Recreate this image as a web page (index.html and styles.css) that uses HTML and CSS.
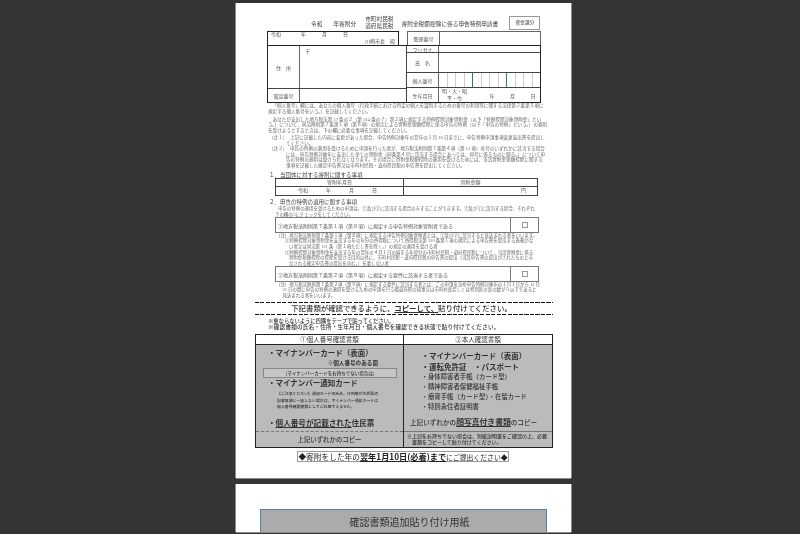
FILE: index.html
```html
<!DOCTYPE html>
<html lang="ja">
<head>
<meta charset="utf-8">
<title>寄附金税額控除に係る申告特例申請書</title>
<link rel="stylesheet" href="styles.css">
</head>
<body>
<main class="viewer">
<section class="page">
  <div class="title-row">
    <span class="t-era">令和</span><span class="t-year">年寄附分</span>
    <span class="t-tax"><span>市町村民税</span><span>道府県民税</span></span>
    <span class="t-name">寄附金税額控除に係る申告特例申請書</span>
    <span class="t-box">資金課分</span>
  </div>
  <div class="form">
    <div class="form-top">
      <div class="date-box"><div class="date-line"><span>令和</span><span class="d-y">年</span><span>月</span><span>日</span></div><div class="mayor">川崎市長　殿</div></div>
      <div class="ref-box"><span class="lab">整理番号</span><span></span></div>
    </div>
    <div class="form-main">
      <div class="left-col">
        <div class="l-row addr"><span class="lab">住　所</span><span class="val">〒</span></div>
        <div class="l-row tel"><span class="lab">電話番号</span><span class="val"></span></div>
      </div>
      <div class="right-col">
        <div class="r-row furi"><span class="lab">フリガナ</span><span></span></div>
        <div class="r-row name"><span class="lab">氏　名</span><span></span></div>
        <div class="r-row mynum"><span class="lab">個人番号</span><span class="digits"><i></i><i></i><i></i><i class="b"></i><i></i><i></i><i></i><i class="b"></i><i></i><i></i><i></i><i></i></span></div>
        <div class="r-row birth"><span class="lab">生年月日</span><span class="birth-val"><span class="era">明・大・昭<br>平・令</span><span>年</span><span>月</span><span>日</span></span></div>
      </div>
    </div>
  </div>
  <p class="para">「個人番号」欄には、あなたの個人番号（行政手続における特定の個人を識別するための番号の利用等に関する法律第２条第５項に<br>規定する個人番号をいう。）を記載してください。</p>
  <p class="para second">あなたが支出した地方税法第 37 条の２（第 314 条の７）第２項に規定する特例控除対象寄附金（以下「特例控除対象寄附金」とい<br>う。）について、同法附則第７条第１項（第８項）の規定による寄附金税額控除に係る申告の特例（以下「申告の特例」という。）の適用<br>を受けようとするときは、下の欄に必要な事項を記載してください。</p>
  <div class="note n1"><span>（注１）</span><p>上記に記載した内容に変更があった場合、申告特例対象年の翌年の１月 10 日までに、申告特例申請事項変更届出書を提出し<br>てください。</p></div>
  <div class="note"><span>（注２）</span><p>申告の特例の適用を受けるために申請を行った者が、地方税法附則第７条第４項（第 13 項）各号のいずれかに該当する場合<br>には、申告特例対象年に支出した全ての寄附金（同条第４号に該当する場合にあっては、同号に係るものに限る。）について申<br>告の特例の適用は受けられなくなります。その場合に寄附金税額控除の適用を受けるためには、当該寄附金税額控除に関する<br>事項を記載した確定申告書又は市町村民税・道府県民税の申告書を提出してください。</p></div>
  <h2 class="sec">１．当団体に対する寄附に関する事項</h2>
  <div class="gift">
    <div class="g-head"><span>寄附年月日</span><span>寄附金額</span></div>
    <div class="g-body"><span class="g-date"><b>令和</b><b>年</b><b>月</b><b>日</b></span><span class="g-yen">円</span></div>
  </div>
  <h2 class="sec two">２．申告の特例の適用に関する事項</h2>
  <p class="intro">申告の特例の適用を受けるための申請は、①及び②に該当する場合のみすることができます。①及び②に該当する場合、それぞれ<br>下の欄の□にチェックをしてください。</p>
  <div class="check"><span>①地方税法附則第７条第１項（第８項）に規定する申告特例対象寄附者である</span><span class="cb"><i></i></span></div>
  <div class="fine">（注）地方税法附則第７条第１項（第８項）に規定する申告特例対象寄附者とは、①及び②に該当すると見込まれる者をいいます。
    <p>⑴特例控除対象寄附金を支出する年の年分の所得税について所得税法第 120 条第１項の規定による申告書を提出する義務がな<br>い者又は同法第 121 条（第１項ただし書を除く。）の規定の適用を受ける者</p>
    <p>⑵特例控除対象寄附金を支出する年の翌年の４月１日の属する年度分の市町村民税・道府県民税について、当該寄附金に係る<br>寄附金税額控除の控除を受ける目的以外に、市町村民税・道府県民税の申告書の提出（当該申告書の提出がされたものとみ<br>なされる確定申告書の提出を含む。）を要しない者</p>
  </div>
  <div class="check"><span>②地方税法附則第７条第２項（第９項）に規定する要件に該当する者である</span><span class="cb"><i></i></span></div>
  <div class="fine fine2">（注）地方税法附則第７条第２項（第９項）に規定する要件に該当する者とは、この申請を含め申告特例対象年の１月１日から 12 月<br>31 日の間に申告の特例の適用を受けるための申請を行う都道府県の知事又は市町村長若しくは特別区の長の数が５以下であると<br>見込まれる者をいいます。</div>
  <div class="dash"></div>
  <div class="copy-line">下記書類が確認できるように、<u>コピーして、</u>貼り付けてください。</div>
  <div class="dash second"></div>
  <div class="warn">※重ならないように四隅をテープで貼ってください。<br>※確認書類の氏名・住所・生年月日・個人番号を確認できる状態で貼り付けてください。</div>
  <div class="docs">
    <div class="doc-col">
      <div class="doc-head">①個人番号確認書類</div>
      <div class="doc-body one">
        <div class="big">・マイナンバーカード（表面）</div>
        <div class="side">※個人番号のある面</div>
        <div class="strip">（マイナンバーカードをお持ちでない場合は）</div>
        <div class="big card2">・マイナンバー通知カード</div>
        <div class="tiny">【ご注意ください】通知カードの氏名、住所等が住民票の<br>記載事項と一致しない場合は、マイナンバー通知カードは<br>個人番号確認書類としてご利用できません。</div>
        <div class="big strong">・<u>個人番号が記載された</u>住民票</div>
      </div>
      <div class="doc-foot">上記いずれかのコピー</div>
    </div>
    <div class="doc-col">
      <div class="doc-head">②本人確認書類</div>
      <div class="doc-body two">
        <div class="big">・マイナンバーカード（表面）</div>
        <div class="big strong">・運転免許証　・パスポート</div>
        <div class="mid">・身体障害者手帳（カード型）</div>
        <div class="mid">・精神障害者保健福祉手帳</div>
        <div class="mid">・療育手帳（カード型）・在留カード</div>
        <div class="mid">・特別永住者証明書</div>
        <div class="sum">上記いずれかの<u>顔写真付き書類</u>のコピー</div>
      </div>
      <div class="doc-foot small">※上記をお持ちでない場合は、別紙説明書をご確認の上、必要<br><span class="out-s">書類をコピーして貼り付けてください。</span></div>
    </div>
  </div>
  <div class="deadline"><span class="dl-a">◆寄附をした年の</span><u>翌年1月10日(必着)まで</u><span class="dl-c">にご提出ください◆</span></div>
</section>
<section class="page next">
  <div class="add-head">確認書類追加貼り付け用紙</div>
</section>
</main>
</body>
</html>
```
FILE: styles.css
```css
* { box-sizing: border-box; margin: 0; padding: 0; }
html, body { width: 800px; height: 534px; overflow: hidden; background: #343434; }
body { font-family: "Liberation Serif", "Noto Sans CJK JP", serif; color: #333; }
.viewer { height: 534px; padding: 3px 0 0 236px; overflow: hidden; display: flex; flex-direction: column; align-items: flex-start; gap: 6px; }
.page { width: 335px; height: 475px; flex: none; background: #fff; padding: 0 0 0 31px; box-shadow: -1px 0 0 #8a8a8a, 1px 0 0 #8a8a8a, 0 1px 0 #8a8a8a; filter: blur(.3px); white-space: nowrap; }
.page.next { height: 48px; padding: 25px 0 0 24px; }
.add-head { width: 287px; height: 23px; padding-left: 12px; background: #ababab; border: 1px solid #5f7e9e; border-bottom: 0; font-family: "Noto Sans CJK JP", sans-serif; font-size: 10px; line-height: 24px; text-align: center; color: #333; }
.title-row { height: 28px; padding-top: 12px; display: flex; align-items: center; font-size: 5.7px; color: #444; }
.t-era { margin-left: 44px; }
.t-year { margin-left: 11px; }
.t-tax { margin-left: 9px; display: flex; flex-direction: column; line-height: 7.5px; }
.t-name { margin-left: 8px; }
.t-box { margin-left: 11px; width: 31px; height: 14px; border: 1px solid #999; font-size: 4.8px; line-height: 12px; text-align: center; }
.form { width: 274px; font-size: 5px; color: #555; }
.form-top { display: flex; height: 14px; justify-content: space-between; }
.date-box { width: 132px; border: 1px solid #222; border-bottom: 0; padding: 0 3px; }
.date-line { display: flex; gap: 16px; line-height: 6px; }
.d-y { margin-left: 4px; }
.mayor { text-align: right; line-height: 6px; margin-top: 1px; }
.ref-box { width: 134px; border: 1px solid #666; border-bottom: 0; display: flex; }
.lab { flex: none; display: flex; align-items: center; justify-content: center; width: 32px; border-right: 1px solid #666; height: 100%; }
.form-main { display: flex; height: 58px; border: 1px solid #222; }
.left-col { width: 139px; border-right: 1px solid #444; display: flex; flex-direction: column; }
.l-row { display: flex; }
.l-row.addr { height: 43px; border-bottom: 1px solid #444; }
.l-row.tel { flex: 1; }
.val { padding: 2px 5px; font-size: 5.5px; }
.right-col { flex: 1; display: flex; flex-direction: column; }
.r-row { display: flex; border-bottom: 1px solid #444; }
.r-row:last-child { border-bottom: 0; }
.furi { height: 7px; } .name { height: 21px; } .mynum { height: 15px; } .birth { flex: 1; }
.digits { flex: 1; display: flex; }
.digits i { flex: 1; border-right: 1px solid #ccc; }
.digits i.b { border-right-color: #3d6f96; }
.digits i:last-child { border-right: 0; }
.birth-val { flex: 1; display: flex; align-items: center; gap: 15.5px; padding-left: 3px; }
.era { width: 25px; margin-right: 7px; line-height: 7px; text-align: center; }
.para, .note { font-size: 4.6px; line-height: 5.6px; color: #666; padding-left: 1px; }
.para { text-indent: 4.5px; }
.para.second { margin-top: 2.5px; }
.note { display: flex; }
.note.n1 { margin-top: 1.5px; }
.note > span { flex: none; width: 18px; padding-left: 1px; }
.note p { flex: 1; text-indent: 4px; }
.sec { font-size: 5.5px; font-weight: 400; color: #444; line-height: 7px; margin-top: 3px; padding-left: 2px; }
.sec.two { margin-top: 3.5px; }
.gift { width: 263px; margin: -1px 0 0 8px; border: 1px solid #444; font-size: 5px; color: #555; }
.g-head { display: flex; height: 8px; border-bottom: 1px solid #444; line-height: 7px; text-align: center; }
.g-head span:first-child { width: 128px; border-right: 1px solid #444; }
.g-head span:last-child { flex: 1; }
.g-body { display: flex; height: 8px; line-height: 8px; }
.g-date { width: 128px; border-right: 1px solid #444; display: flex; gap: 18px; padding-left: 22px; }
.g-date b { font-weight: 400; }
.g-yen { flex: 1; text-align: right; padding-right: 11px; }
.intro { margin-left: 8px; font-size: 4.45px; line-height: 5.6px; color: #666; text-indent: 3px; }
.check { width: 264px; margin-left: 8px; height: 16px; border: 1px solid #777; display: flex; align-items: center; font-size: 5px; color: #555; }
.check span:first-child { flex: 1; padding-left: 2px; }
.cb { flex: none; width: 28px; height: 100%; border-left: 1px solid #777; display: flex; align-items: center; justify-content: center; }
.cb i { width: 6px; height: 6px; border: 1px solid #999; }
.fine { margin: -.5px 0 0 9px; font-size: 4.45px; line-height: 5.6px; color: #666; }
.fine p { padding-left: 13px; text-indent: -4px; }
.fine2 { padding-left: 6.5px; text-indent: -6.5px; }
.dash { width: 298px; margin: 3.5px 0 0 -12px; height: 1px; background: repeating-linear-gradient(90deg, #111 0 4px, transparent 4px 5.5px); }
.copy-line { width: 283px; margin-left: -7px; text-align: center; font-family: "Noto Sans CJK JP", sans-serif; font-size: 7.4px; line-height: 10.5px; font-weight: 500; color: #333; }
.copy-line u { font-weight: 700; }
.dash.second { margin-top: 0; }
.warn { margin-top: 3px; padding-left: 1px; font-family: "Noto Sans CJK JP", sans-serif; font-size: 5.6px; letter-spacing: .2px; line-height: 6.6px; font-weight: 500; color: #333; }
.warn::first-line { font-size: 5.3px; letter-spacing: 0; }
.docs { width: 298px; margin: 3px 0 0 -12px; display: flex; border: 1px solid #222; font-family: "Noto Sans CJK JP", sans-serif; color: #333; background: #bbb; }
.doc-col { display: flex; flex-direction: column; }
.doc-col:first-child { width: 148px; border-right: 1px solid #222; }
.doc-col:last-child { flex: 1; }
.doc-head { height: 10px; background: #fff; border-bottom: 1px solid #222; font-size: 6.5px; line-height: 9px; text-align: center; }
.doc-body { height: 86px; }
.doc-body.one { padding: 2px 0 0 12px; }
.doc-body.two { padding: 5.5px 0 0 17.5px; }
.big { font-size: 7.5px; line-height: 11px; font-weight: 700; }
.one .big.strong { margin-top: 6.5px; font-size: 7.6px; }
.big.card2 { margin-top: -1.5px; }
.side { margin-top: 2px; font-size: 5.6px; line-height: 7px; font-weight: 700; text-align: right; padding-right: 25px; }
.strip { margin: 1.5px 0 0 -5px; width: 134px; height: 10px; border: 1px solid #888; background: #c6c6c6; font-size: 4.5px; line-height: 8px; text-align: center; font-weight: 500; }
.tiny { font-size: 3.9px; line-height: 6.8px; margin: 2px 0 0 9px; font-weight: 500; }
.mid { font-size: 6.4px; line-height: 10px; font-weight: 500; }
.sum { font-size: 6.6px; line-height: 10px; font-weight: 500; margin: 5px 0 0 -11.5px; }
.sum u { font-size: 7.8px; font-weight: 700; }
.doc-foot { height: 16px; border-top: 1px dashed #777; font-size: 6.4px; line-height: 15px; text-align: center; font-weight: 500; }
.doc-foot.small { border-top: 1px solid #777; font-size: 5px; line-height: 6px; padding: 1.5px 0 0 3px; text-align: left; }
.out-s { margin-left: 5px; }
.deadline { width: 212px; height: 11px; margin: 3px 0 0 30px; border: 1px solid #999; font-family: "Noto Sans CJK JP", sans-serif; font-size: 7.7px; line-height: 9px; text-align: center; color: #222; background: #fff; }
.deadline u { font-weight: 700; font-size: 8.2px; }
.dl-c { font-size: 6.85px; }
```
